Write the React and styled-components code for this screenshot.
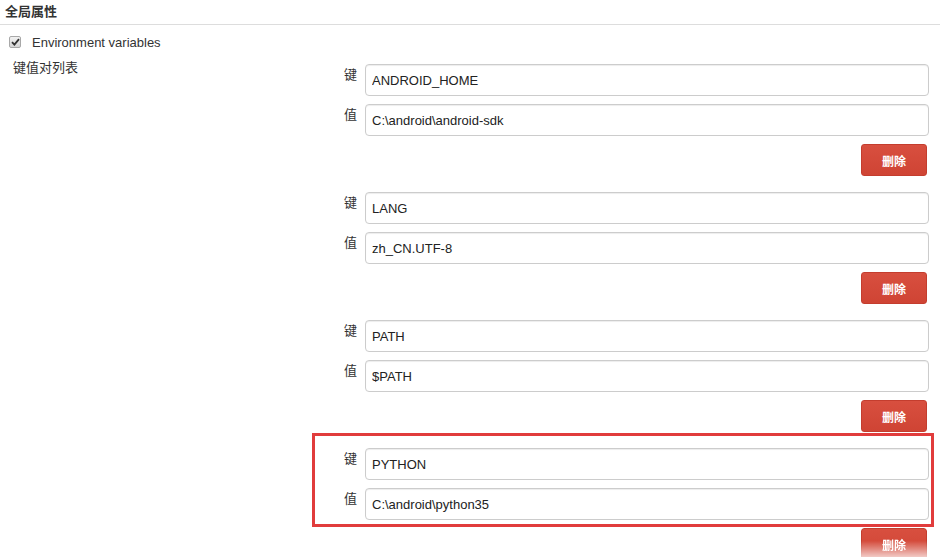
import React from "react";
import styled, { createGlobalStyle } from "styled-components";

const GlobalStyle = createGlobalStyle`
  body {
    margin: 0;
    background: #fff;
    font-family: "Liberation Sans", Arial, "Noto Sans CJK SC", sans-serif;
    font-size: 13px;
    color: #333;
  }
`;

const envVars = [
  { key: "ANDROID_HOME", value: "C:\\android\\android-sdk" },
  { key: "LANG", value: "zh_CN.UTF-8" },
  { key: "PATH", value: "$PATH" },
  { key: "PYTHON", value: "C:\\android\\python35", highlighted: true },
];

export default function App() {
  return (
    <>
      <GlobalStyle />
      <Page>
        <SectionHeader>全局属性</SectionHeader>
        <CheckRow>
          <CheckBox>
            <svg width="9" height="8" viewBox="0 0 9 8">
              <path d="M1 4.2 L3.4 6.6 L8 1.2" fill="none" stroke="#333" strokeWidth="1.8" />
            </svg>
          </CheckBox>
          <CheckLabel>Environment variables</CheckLabel>
        </CheckRow>
        <FormRow>
          <FieldName>键值对列表</FieldName>
          <Entries>
            {envVars.map((item) => (
              <Entry key={item.key}>
                <Pair $highlighted={item.highlighted}>
                  <Line>
                    <PairLabel>键</PairLabel>
                    <TextBox defaultValue={item.key} />
                  </Line>
                  <Line>
                    <PairLabel>值</PairLabel>
                    <TextBox defaultValue={item.value} />
                  </Line>
                </Pair>
                <ButtonRow>
                  <DeleteButton $faded={item.highlighted}>删除</DeleteButton>
                </ButtonRow>
              </Entry>
            ))}
          </Entries>
        </FormRow>
      </Page>
    </>
  );
}

const Page = styled.div`
  width: 940px;
  height: 557px;
  overflow: hidden;
`;

const SectionHeader = styled.div`
  height: 24px;
  line-height: 24px;
  padding-left: 5px;
  font-weight: bold;
  font-size: 13px;
  color: #333;
  border-bottom: 1px solid #ddd;
`;

const CheckRow = styled.div`
  display: flex;
  align-items: center;
  height: 18px;
  margin-top: 8px;
  padding-left: 9px;
`;

const CheckBox = styled.span`
  display: flex;
  align-items: center;
  justify-content: center;
  box-sizing: border-box;
  width: 12px;
  height: 12px;
  border: 1px solid #a8a8a8;
  border-radius: 2px;
  background: linear-gradient(#f2f2f2, #d6d6d6);
`;

const CheckLabel = styled.span`
  margin-left: 11px;
  color: #333;
`;

const FormRow = styled.div`
  display: flex;
  margin-top: 7px;
`;

const FieldName = styled.div`
  width: 327px;
  padding-left: 13px;
  line-height: 20px;
  color: #333;
`;

const Entries = styled.div`
  display: flex;
  flex-direction: column;
  gap: 16px;
  width: 589px;
  padding-top: 6px;
`;

const Entry = styled.div`
  display: flex;
  flex-direction: column;
  gap: 8px;
`;

const Pair = styled.div`
  display: flex;
  flex-direction: column;
  gap: 8px;
  ${(p) =>
    p.$highlighted &&
    `
    margin: -15px -5px -7px -28px;
    padding: 12px 2px 4px 25px;
    border: 3px solid #e13c3c;
  `}
`;

const Line = styled.div`
  display: flex;
  align-items: flex-start;
`;

const PairLabel = styled.span`
  width: 25px;
  padding-right: 8px;
  box-sizing: border-box;
  text-align: right;
  line-height: 20px;
  padding-top: 1px;
  color: #333;
`;

const TextBox = styled.input`
  flex: 1;
  box-sizing: border-box;
  height: 32px;
  padding: 0 6px;
  border: 1px solid #ccc;
  border-radius: 4px;
  box-shadow: inset 0 1px 1px rgba(0, 0, 0, 0.075);
  font-family: "Liberation Sans", Arial, sans-serif;
  font-size: 13px;
  color: #222;
  background: #fff;
  outline: none;
`;

const ButtonRow = styled.div`
  display: flex;
  justify-content: flex-end;
  padding-right: 2px;
`;

const DeleteButton = styled.button`
  width: 66px;
  height: 32px;
  border: 1px solid #c43d2e;
  border-radius: 3px;
  background: linear-gradient(#d84f3f, #cf4434);
  color: #fff;
  font-family: "Noto Sans CJK SC", sans-serif;
  font-weight: bold;
  font-size: 12px;
  cursor: pointer;
  ${(p) =>
    p.$faded &&
    `
    -webkit-mask-image: linear-gradient(#000 40%, rgba(0,0,0,0.15) 100%);
    mask-image: linear-gradient(#000 40%, rgba(0,0,0,0.15) 100%);
  `}
`;
